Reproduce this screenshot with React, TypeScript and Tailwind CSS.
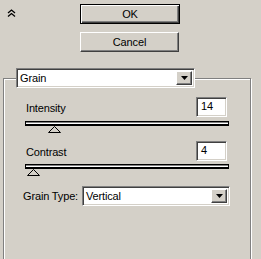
import React from "react";

const raised =
  "border border-t-white border-l-white border-r-[#404040] border-b-[#404040] shadow-[inset_-1px_-1px_0_#808080]";
const sunken =
  "border border-t-[#808080] border-l-[#808080] border-r-white border-b-white shadow-[inset_1px_1px_0_#404040,inset_-1px_-1px_0_#d4d0c8]";

function DownArrow() {
  return (
    <svg width="7" height="4" viewBox="0 0 7 4">
      <polygon points="0,0 7,0 3.5,4" fill="#000" />
    </svg>
  );
}

function Dropdown({value, width}: {value: string; width: string}) {
  return (
    <div className={`flex h-[20px] ${width} bg-white ${sunken} p-[2px]`}>
      <div className="flex-1 pl-[1px] leading-[15px] text-black">{value}</div>
      <div className={`flex w-[16px] items-center justify-center bg-[#d4d0c8] ${raised}`}>
        <DownArrow />
      </div>
    </div>
  );
}

function NumberBox({value}: {value: string}) {
  return (
    <div className={`h-[20px] w-[31px] bg-white ${sunken} pl-[4px] leading-[17px]`}>
      {value}
    </div>
  );
}

function Slider({value, className}: {value: number; className: string}) {
  return (
    <div className={`relative h-[11px] w-[204px] ${className}`}>
      <div className="h-[5px] border border-black border-b-2 bg-white shadow-[inset_0_1px_0_#808080]" />
      <svg
        className="absolute top-[5px]"
        style={{left: `calc(${value}% - 6px)`}}
        width="13"
        height="7"
        viewBox="0 0 13 7"
      >
        <polygon points="6.5,0.5 12.5,6.5 0.5,6.5" fill="#d4d0c8" stroke="#000" strokeWidth="1" />
      </svg>
    </div>
  );
}

function Row({label, value, className}: {label: string; value: string; className: string}) {
  return (
    <div className={`ml-[10px] flex h-[20px] w-[201px] items-center justify-between ${className}`}>
      <span className="pt-[2px]">{label}</span>
      <NumberBox value={value} />
    </div>
  );
}

export default function App() {
  return (
    <div className="h-[259px] w-[261px] overflow-hidden bg-[#d4d0c8] font-['Liberation_Sans',Arial,sans-serif] text-[11px] tracking-[-0.15px] text-black">
      <div className="flex pt-[4px]">
        <div className="ml-[7px] mt-[5px] w-[73px]">
          <svg width="9" height="8" viewBox="0 0 9 8">
            <polyline points="1,4 4.5,1 8,4" fill="none" stroke="#000" strokeWidth="1.3" />
            <polyline points="1,7.5 4.5,4.5 8,7.5" fill="none" stroke="#000" strokeWidth="1.3" />
          </svg>
        </div>
        <div className="flex flex-col gap-[8px]">
          <button className="h-[20px] w-[100px] border border-black bg-[#d4d0c8] shadow-[inset_1px_1px_0_#fff,inset_-1px_-1px_0_#404040,inset_-2px_-2px_0_#808080] leading-none">
            OK
          </button>
          <button className={`h-[20px] w-[99px] bg-[#d4d0c8] ${raised} leading-none`}>
            Cancel
          </button>
        </div>
      </div>

      <fieldset className="ml-[3px] mt-[16px] h-[220px] w-[248px] border border-[#808080] pl-[12px] shadow-[inset_1px_1px_0_#fff,1px_1px_0_#fff]">
        <legend>
          <Dropdown value="Grain" width="w-[179px]" />
        </legend>
        <Row label="Intensity" value="14" className="mt-[9px]" />
        <Slider value={14} className="ml-[9px] mt-[4px]" />
        <Row label="Contrast" value="4" className="mt-[9px]" />
        <Slider value={4} className="ml-[9px] mt-[3px]" />
        <div className="ml-[7px] mt-[11px] flex h-[20px] items-center">
          <span className="w-[59px] pt-[1px]">Grain Type:</span>
          <Dropdown value="Vertical" width="w-[148px]" />
        </div>
      </fieldset>
    </div>
  );
}
